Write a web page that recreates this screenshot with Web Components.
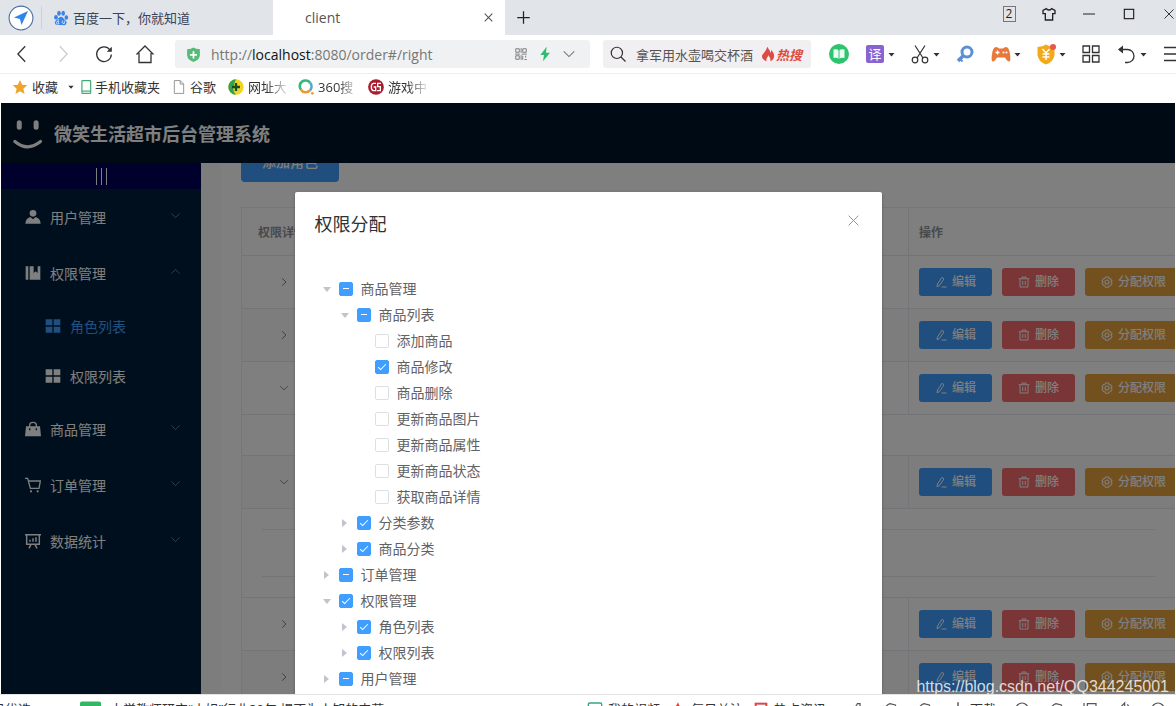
<!DOCTYPE html>
<html lang="zh-CN">
<head>
<meta charset="utf-8">
<title>client</title>
<style>
html,body{margin:0;height:100%;overflow:hidden}
body{font-family:"Open Sans","Noto Sans CJK SC",sans-serif;font-size:13px;color:#333;background:#fff}
</style>
</head>
<body>
<browser-shell>
  <tab-strip slot="tabs"></tab-strip>
  <nav-bar slot="nav"></nav-bar>
  <bookmark-bar slot="marks"></bookmark-bar>
  <admin-app slot="page">
    <side-menu slot="side">
      <menu-item icon="user" arrow="down">用户管理</menu-item>
      <menu-item icon="book" arrow="up">权限管理</menu-item>
      <menu-item icon="grid4" sub active>角色列表</menu-item>
      <menu-item icon="grid4" sub>权限列表</menu-item>
      <menu-item icon="bag" arrow="down">商品管理</menu-item>
      <menu-item icon="cart" arrow="down">订单管理</menu-item>
      <menu-item icon="board" arrow="down">数据统计</menu-item>
    </side-menu>
    <role-table slot="main"></role-table>
    <modal-dialog slot="dialog" heading="权限分配">
      <tree-node label="商品管理" open state="half">
        <tree-node label="商品列表" open state="half">
          <tree-node label="添加商品" leaf></tree-node>
          <tree-node label="商品修改" leaf state="on"></tree-node>
          <tree-node label="商品删除" leaf></tree-node>
          <tree-node label="更新商品图片" leaf></tree-node>
          <tree-node label="更新商品属性" leaf></tree-node>
          <tree-node label="更新商品状态" leaf></tree-node>
          <tree-node label="获取商品详情" leaf></tree-node>
        </tree-node>
        <tree-node label="分类参数" state="on"></tree-node>
        <tree-node label="商品分类" state="on"></tree-node>
      </tree-node>
      <tree-node label="订单管理" state="half"></tree-node>
      <tree-node label="权限管理" open state="on">
        <tree-node label="角色列表" state="on"></tree-node>
        <tree-node label="权限列表" state="on"></tree-node>
      </tree-node>
      <tree-node label="用户管理" state="half"></tree-node>
    </modal-dialog>
  </admin-app>
  <status-bar slot="status"></status-bar>
</browser-shell>

<script>
// Icon set, all on a 24-unit grid.
const L = 'fill="none" stroke="currentColor"';
const ICONS = {
  plane: `<circle cx="12" cy="12" r="11" fill="#fff" stroke="#4a6f9e" stroke-width="1"/><path d="M18.5 5.5 5.5 11.5 11 13 12.5 18.5z" fill="#2f86ea"/>`,
  paw: `<g fill="#3a84e8"><ellipse cx="4.5" cy="11" rx="2.8" ry="3.5"/><ellipse cx="9" cy="5" rx="2.7" ry="3.8"/><ellipse cx="15.3" cy="5" rx="2.7" ry="3.8"/><ellipse cx="20" cy="11.3" rx="2.7" ry="3.5"/><path d="M12 10c3 0 4 3 6 5s3 3 2 5.500-4 2.500-8 2-8 .5-9-2 .5-4 2.500-5.500S9 10 12 10z"/></g><path d="M8 14v6M8 17.500a2 2 0 1 0 1 2M14 16v3q0 1.500 3 1.500V16" stroke="#fff" fill="none"/>`,
  x: `<path ${L} stroke-width="2" d="M5 5l14 14M19 5 5 19"/>`,
  thinx: `<path ${L} stroke-width="1.800" d="M3 3l18 18M21 3 3 21"/>`,
  plus: `<path ${L} stroke-width="2" d="M12 2v20M2 12h20"/>`,
  shirt: `<path ${L} stroke-width="2" d="M8 4 3 6.500v5h3.500V21h11v-9.500H21v-5L16 4q-4 4-8 0z"/>`,
  min: `<path ${L} stroke-width="1.500" d="M3 12h18"/>`,
  max: `<rect x="4" y="4" width="16" height="16" ${L} stroke-width="2"/>`,
  back: `<path ${L} stroke-width="1.400" d="M15.500 3.500 7.500 12l8 8.500"/>`,
  fwd: `<path ${L} stroke-width="1.400" d="M8.500 3.500 16.500 12l-8 8.500"/>`,
  reload: `<path ${L} stroke-width="1.400" d="M18.500 7.500A8 8 0 1 0 20 12.500"/><path d="M20.500 4v5.500h-5.500z" fill="currentColor"/>`,
  home: `<path ${L} stroke-width="1.300" d="M3.500 12.500 12 4l8.500 8.500M6 11v9.500h12V11"/>`,
  shield: `<path d="M3 4.500Q9 4 12 2q3 2 9 2.500v9Q20 20 12 22.500 4 20 3 13.500z" fill="#57ba78"/><path d="M12 7.500v10M7 12.500h10" stroke="#fff" stroke-width="2.500"/>`,
  qr: `<g ${L} stroke-width="1.600"><path d="M3 3h6v6H3zM15 3h6v6h-6zM3 15h6v6H3z"/><path d="M12.200 2v8M2 12.200h8M13 12.200h9M15 15v7M20 15v3M18 21.500h4M12.200 14v8"/></g>`,
  bolt: `<path d="M14.500 1 5 13.500h5.500L9 23l10.500-13H13.500z" fill="#2ebd70"/>`,
  chev: `<path ${L} stroke-width="1.800" d="M3 7.500l9 9 9-9"/>`,
  chevup: `<path ${L} stroke-width="1.800" d="M3 16.500l9-9 9 9"/>`,
  chevr: `<path ${L} stroke-width="2" d="M7.500 3l9 9-9 9"/>`,
  caret: `<path d="M4 8h16l-8 9z" fill="currentColor"/>`,
  search: `<circle cx="10.500" cy="10.500" r="7.500" ${L} stroke-width="1.600"/><path ${L} stroke-width="1.600" d="M16 16l6 6"/>`,
  fire: `<path d="M11 1c2 4 4 5 4.500 9 1-1 1.500-3 1.500-4.500 3 4 5 7.500 4 11.500-1 4-4 5.500-5.500 6 1-4-1-6-3-9-1 3.500-4 4.500-2.500 9C6 22 3 19 3 15.500S8 10 11 1z" fill="#dd4b43"/>`,
  reader: `<circle cx="12" cy="12" r="10" fill="#2ec46f"/><path d="M6.500 7.500Q10 6.500 12 8.500q2-2 5.500-1v8.500q-3-1-5.500 1-2.500-2-5.500-1z" fill="#e9fff2"/><path d="M12 8v9" stroke="#2ec46f"/>`,
  scissors: `<g ${L} stroke-width="1.200"><path d="M7 3.500 15 16M17 3.500 9 16"/><circle cx="7" cy="18" r="2.800"/><circle cx="17" cy="18" r="2.800"/></g>`,
  key: `<g fill="none" stroke="#5b8fd6"><circle cx="14" cy="10" r="5" stroke-width="3"/><path stroke-width="3.600" d="M10 14 5 19"/><path stroke-width="2" d="M6 16l3.500 3.500"/></g>`,
  pad: `<path d="M7 5q2 0 3 1.500h4Q15 5 17 5q3 0 4 7t-.5 7.500Q18.500 20 16 15.500H8Q5.500 20 3.500 19.500 2 19 3 12T7 5z" fill="#e8793a"/><path d="M6.500 10.500h4M8.500 8.500v4" stroke="#fff" stroke-width="1.300"/><circle cx="14.500" cy="10.500" r="1" fill="#fff"/><circle cx="17.500" cy="10.500" r="1" fill="#fff"/>`,
  coin: `<path d="M3.500 5Q9 4.500 12 2.500 15 4.500 20.500 5v8q-1 7-8.500 9.500Q4.500 20 3.500 13z" fill="#f2a91c"/><path d="M8.500 7l3.500 4 3.500-4M12 11v7M8.500 12h7M8.500 15h7" ${L} style="color:#fff" stroke-width="1.400"/><circle cx="19" cy="5" r="3" fill="#e7594f"/>`,
  apps: `<g ${L} stroke-width="1.300"><path d="M4 4h6.500v6.500H4zM13.500 4H20v6.500h-6.500zM4 13.500h6.500V20H4zM13.500 13.500H20V20h-6.500z"/></g>`,
  undo: `<path ${L} stroke-width="1.300" d="M4 7.500h8.500a6.500 6.500 0 0 1 0 13H10"/><path d="M8 3.500 3 7.500 8 11.500z" fill="currentColor"/>`,
  menu: `<path ${L} stroke-width="1.300" d="M4 5.500h18M4 12h18M4 18.500h18"/>`,
  star: `<path d="M12 1.500l3.200 7.300 7.800.7-6 5.200 1.900 7.800-6.900-4.200-6.900 4.200L7 14.700 1 9.500l7.800-.7z" fill="#eda52b"/>`,
  phone: `<rect x="5" y="1" width="15" height="22" rx="1" fill="none" stroke="#41a975" stroke-width="2"/><path d="M5 19h15" stroke="#41a975" stroke-width="2"/>`,
  page: `<path fill="none" stroke="#8f8f8f" stroke-width="1.600" d="M4 1h10l6 6v16H4zM14 1v6h6"/>`,
  nav360: `<circle cx="12" cy="12" r="11.500" fill="#f0d623"/><path d="M12 .5a11.500 11.500 0 0 0 0 23Q4 17 12 .5z" fill="#31a34c"/><path d="M12 6v12M6 12h12" stroke="#164d24" stroke-width="3.500"/>`,
  so360: `<g fill="none" stroke-width="4"><path stroke="#37b77c" d="M4.500 16A8.500 8.500 0 0 1 18 5.500"/><path stroke="#55a7c9" d="M18 5.500A8.500 8.500 0 0 1 18 17"/><path stroke="#e99a35" d="M18 17A8.500 8.500 0 0 1 4.500 16"/></g><circle cx="21.500" cy="21.500" r="2" fill="#e99a35"/>`,
  game: `<circle cx="12" cy="12" r="11.800" fill="#a91d2f"/><path d="M12 6.500H8Q5 7 5 12t3 5.500h3.500V12H8.500M19.500 6.500h-5V11.500h4V17.500h-5" fill="none" stroke="#fff" stroke-width="2"/>`,
  user: `<circle cx="12" cy="6.500" r="5" fill="currentColor"/><path d="M8 12l4 3.500L16 12q7 2 7.500 10H.5Q1 14 8 12z" fill="currentColor"/>`,
  book: `<path d="M1 2h4v20H1zM7 2h6v10l3-2.500 3 2.500V2h4v20H7z" fill="currentColor"/>`,
  grid4: `<path d="M1 2h10v9H1zM13 2h10v9H13zM1 13h10v9H1zM13 13h10v9H13z" fill="currentColor"/>`,
  bag: `<path d="M1.500 8h21L24 23H0z" fill="currentColor"/><path d="M7 11V6q0-4 5-4t5 4v5" ${L} stroke-width="2"/><path d="M7 11v3M17 11v3" stroke="#001f3a" stroke-width="2"/>`,
  cart: `<path ${L} stroke-width="2" d="M0 2h4l4 15h13l2-11H6"/><circle cx="9" cy="21.500" r="1.700" fill="currentColor"/><circle cx="19" cy="21.500" r="1.700" fill="currentColor"/>`,
  board: `<g ${L} stroke-width="2.200"><path d="M0 2.500h24M2.500 2.500V17h19V2.500M9 17l-3 6M15 17l3 6M7.500 13v-3M12 13V8M16.500 13V6.500"/></g>`,
  smile: `<g ${L} stroke-linecap="round"><path stroke-width="4" d="M5 3v3.500M18.500 3v3.500"/><path stroke-width="2.500" d="M1.500 18q10 8.500 20.500 0"/></g>`,
  edit: `<path ${L} stroke-width="2" d="M14 2.500l4 3L9 19 4 21.500 5 16zM13 22h10"/>`,
  trash: `<path ${L} stroke-width="2" d="M1.500 5.500h21M8 5V2h8v3M4 6v16h16V6M9.500 10v8M14.500 10v8"/>`,
  gear: `<path ${L} stroke-width="2.200" d="M9 2h6l1 3 3 .5 3 4.500-2 2 2 3-3 4.500-3 .5-1 2.500H9L8 19.500l-3-.5L2 14.500 4 12 2 9.500 5 5l3-.5z"/><circle cx="12" cy="12" r="4" ${L} stroke-width="2.200"/>`,
  green: `<rect x="0" y="4" width="24" height="16" rx="2" fill="#31b863"/>`,
  video: `<rect x="2" y="3" width="20" height="18" rx="2" fill="none" stroke="#36a77c" stroke-width="2"/>`,
  flame: `<path d="M12 2q2 6 6 10t-6 10Q2 18 6 12t6-10z" fill="#d9483e"/>`,
  news: `<rect x="4" y="4" width="16" height="17" fill="none" stroke="#d64a43" stroke-width="3"/>`,
  horn: `<path ${L} stroke-width="1.800" d="M4 13Q10 12 14 4h4v17M18 12q4 0 4-4"/>`,
  rocket: `<path ${L} stroke-width="1.800" d="M4 20V12q2-6 8-8l8 2q2 5-3 12M8 12l8-4"/>`,
  down: `<path ${L} stroke-width="1.800" d="M12 2v16M6 13l6 6 6-6"/>`,
  ring: `<circle cx="12" cy="12" r="9" ${L} stroke-width="1.800"/>`,
  pages: `<path ${L} stroke-width="1.800" d="M3 3v18M8 4h13v16H8z"/>`,
  sound: `<path ${L} stroke-width="1.800" d="M3 9h4l6-6v18l-6-6H3zM17 5q6 7 0 14"/>`
};

class Base extends HTMLElement {
  connectedCallback() {
    if (this.shadowRoot) return;
    const t = document.createElement('template');
    t.innerHTML = `<style>*,:host{box-sizing:border-box}${this.css()}</style>${this.html()}`;
    this.attachShadow({mode: 'open'}).append(t.content.cloneNode(true));
    this.ready();
  }
  css() { return ''; }
  html() { return '<slot></slot>'; }
  ready() {}
}

customElements.define('ui-icon', class extends Base {
  css() { return `:host{display:block;flex:none;width:var(--s,16px);height:var(--s,16px)} svg{display:block;width:100%;height:100%}`; }
  html() { return `<svg viewBox="0 0 24 24" aria-hidden="true">${ICONS[this.getAttribute('name')]}</svg>`; }
});
const icon = (name, size = 16, extra = '') => `<ui-icon name="${name}" style="--s:${size}px" ${extra}></ui-icon>`;
const RESET = `button{font:inherit;color:inherit;background:none;border:0;padding:0;margin:0;display:flex;align-items:center;justify-content:center;flex:none}`;

customElements.define('browser-shell', class extends Base {
  // The status bar runs past the bottom edge of the window.
  css() { return `:host{display:flex;flex-direction:column;height:calc(100vh + 16px);background:#fff}
    .page{flex:1;min-height:0;display:flex;padding:0 1px}`; }
  html() { return `<slot name="tabs"></slot><slot name="nav"></slot><slot name="marks"></slot><div class="page"><slot name="page"></slot></div><slot name="status"></slot>`; }
});

customElements.define('tab-strip', class extends Base {
  css() { return RESET + `:host{display:flex;height:35px;flex:none;background:#e1e5ea;color:#222}
    .logo{width:41px}.tab{display:flex;align-items:center;width:232px;gap:4px;padding:0 11px;flex:none}
    .first{border-left:1px solid #cdd2d9;margin:6px 0;color:#3a4358}
    .on{background:#fff;padding:0 10px 0 32px;color:#555;font-size:14px}.on span{flex:1}
    .add{width:37px}.win{margin-left:auto;margin-right:-13px;display:flex;height:28px}.win button{width:40px}
    .two{border:1px solid #777;width:13px;height:16px;line-height:14px;font-size:12px;text-align:center}`; }
  html() { return `<button class="logo" aria-label="浏览器">${icon('plane', 26)}</button>
    <div class="tab first">${icon('paw')}<span>百度一下，你就知道</span></div>
    <div class="tab on"><span>client</span><button aria-label="关闭标签">${icon('x', 13)}</button></div>
    <button class="add" aria-label="新标签">${icon('plus', 15)}</button>
    <div class="win"><button><span class="two">2</span></button><button aria-label="皮肤">${icon('shirt')}</button><button aria-label="最小化">${icon('min')}</button><button aria-label="最大化">${icon('max', 14)}</button><button aria-label="关闭">${icon('thinx', 12)}</button></div>`; }
});

customElements.define('nav-bar', class extends Base {
  css() { return RESET + `:host{display:flex;align-items:center;height:39px;flex:none;padding-left:1px;border-bottom:1px solid #eee;color:#333}
    .nav{width:41px;height:38px}.nav[disabled]{color:#ccc}
    .box{display:flex;align-items:center;height:28px;background:#f0f1f2;border-radius:3px}
    .url{flex:1;min-width:0;margin:0 13px 0 10px;padding:0 14px 0 10px;gap:9px;color:#777;font-size:14px}
    .url b{font-weight:400;color:#111}.url .t{flex:1;outline:0;white-space:nowrap}
    .find{width:208px;flex:none;padding:0 8px 0 6px;gap:5px;background:#f1eff1}
    input{font:inherit;color:#555;border:0;background:none;outline:0;padding:0;width:119px;margin-left:4px}
    .hot{display:flex;align-items:center;color:#dd4b43;font-style:italic;font-weight:700;white-space:nowrap}
    .tools{display:flex;align-items:center;gap:12px;margin:0 -8px 0 16px;flex:none}
    .yi{width:18px;height:18px;margin:0 3px;border-radius:2px;background:#8a63d2;color:#fff;line-height:18px;text-align:center}`; }
  html() {
    const c = icon('caret', 9);
    return `<button class="nav" aria-label="后退">${icon('back', 22)}</button><button class="nav" disabled aria-label="前进">${icon('fwd', 22)}</button>
    <button class="nav" aria-label="刷新">${icon('reload', 22)}</button><button class="nav" aria-label="主页">${icon('home', 24)}</button>
    <div class="box url">${icon('shield', 17)}<div class="t" role="textbox" contenteditable="true" spellcheck="false" aria-label="地址">http://<b>localhost</b>:8080/order#/right</div>${icon('qr', 14)}${icon('bolt', 16)}${icon('chev', 14)}</div>
    <div class="box find">${icon('search', 18)}<input aria-label="搜索" value="拿军用水壶喝交杯酒"><span class="hot">${icon('fire', 16)}热搜</span></div>
    <div class="tools"><button aria-label="阅读">${icon('reader', 24)}</button><button><span class="yi">译</span>${c}</button><button aria-label="截图">${icon('scissors', 24)}${c}</button>
    <button aria-label="查找">${icon('key', 24)}</button><button aria-label="游戏">${icon('pad', 24)}${c}</button><button aria-label="优惠">${icon('coin', 24)}${c}</button>
    <button aria-label="应用">${icon('apps', 24)}</button><button aria-label="撤销">${icon('undo', 24)}${c}</button><button aria-label="菜单">${icon('menu', 24)}</button></div>`;
  }
});

customElements.define('bookmark-bar', class extends Base {
  css() { return `:host{display:flex;align-items:center;gap:12px;height:29px;flex:none;padding:0 12px 4px}
    a{display:flex;align-items:center;gap:4px;color:#333;text-decoration:none;white-space:nowrap;flex:none}
    .fav .c{margin:0 -8px 0 5px}.phone{gap:2px}
    .fade span{width:38px;overflow:hidden;-webkit-mask-image:linear-gradient(90deg,#000 50%,transparent 110%);mask-image:linear-gradient(90deg,#000 50%,transparent 110%)}`; }
  html() { return `<a class="fav" href="#">${icon('star')}<span>收藏</span>${icon('caret', 8, 'class="c"')}</a>
    <a class="phone" href="#">${icon('phone', 14)}<span>手机收藏夹</span></a><a href="#">${icon('page', 14)}<span>谷歌</span></a>
    <a class="fade" href="#">${icon('nav360')}<span>网址大</span></a><a class="fade" href="#">${icon('so360')}<span>360搜</span></a><a class="fade" href="#">${icon('game')}<span>游戏中</span></a>`; }
});

customElements.define('admin-app', class extends Base {
  css() { return `:host{flex:1;min-width:0;display:flex;flex-direction:column;position:relative;overflow:hidden;background:#fff}
    header{display:flex;align-items:center;gap:11px;height:60px;flex:none;padding:2px 12px 0;background:#001428;color:#fff}
    h1{margin:0;font-size:18px;line-height:24px;font-weight:700}
    .row{flex:1;min-height:0;display:flex}
    main{flex:1;min-width:0;overflow:hidden;padding-left:20px;background:#fafafa}
    .mask{position:absolute;inset:0;background:rgba(0,0,0,.5);overflow:hidden;padding-top:89px}
    .mark{position:absolute;right:6px;bottom:-2px;font:16px/18px "Liberation Sans",sans-serif;color:rgba(255,255,255,.8)}`; }
  html() { return `<header>${icon('smile', 30)}<h1>微笑生活超市后台管理系统</h1></header>
    <div class="row"><slot name="side"></slot><main><slot name="main"></slot></main></div>
    <div class="mask"><slot name="dialog"></slot></div><div class="mark">https://blog.csdn.net/QQ344245001</div>`; }
});

customElements.define('side-menu', class extends Base {
  css() { return RESET + `:host{display:block;width:200px;flex:none;background:#001f3a;color:#fff}
    button{width:100%;height:26px;background:#000058}i{width:1px;height:17px;margin:0 2px;background:#fff}`; }
  html() { return `<button aria-label="折叠菜单"><i></i><i></i><i></i></button><nav><slot></slot></nav>`; }
});

customElements.define('menu-item', class extends Base {
  css() { return `:host{display:block}
    a{display:flex;align-items:center;gap:9px;height:56px;padding:0 20px 0 24px;font-size:14px;color:#fff;text-decoration:none}
    span{flex:1}.arr{color:#8090a0;margin-bottom:4px}
    :host([sub]) a{height:50px;padding-left:44px}:host([active]) a{color:#409eff}`; }
  html() {
    const a = this.getAttribute('arrow');
    return `<a href="#">${icon(this.getAttribute('icon'))}<span><slot></slot></span>${a ? icon(a === 'up' ? 'chevup' : 'chev', 11, 'class="arr"') : ''}</a>`;
  }
});

customElements.define('action-button', class extends Base {
  css() { return `:host{display:inline-block}
    button{display:flex;align-items:center;gap:5px;height:28px;padding:0 16px;border:0;border-radius:3px;color:#fff;font:500 12px/12px "Open Sans","Noto Sans CJK SC",sans-serif;white-space:nowrap;background:#409eff}
    :host([kind=danger]) button{background:#f56c6c}:host([kind=warning]) button{background:#e6a23c}
    :host([kind=primary]) button{height:40px;padding:0 21px;font-size:14px;border-radius:4px}`; }
  html() { const i = this.getAttribute('icon'); return `<button>${i ? icon(i, 12) : ''}<slot></slot></button>`; }
});

customElements.define('role-table', class extends Base {
  // Shown part-way scrolled: the add button is half under the header.
  css() { return `:host{display:block;margin-top:-21px;padding-left:20px;background:#fff}
    table{width:100%;margin-top:25px;border-collapse:separate;border-spacing:0;table-layout:fixed;border:1px solid #ebeef5;border-width:1px 0 0 1px;color:#606266}
    .c1{width:84px}.c3{width:267px}
    th,td{padding:0;border-bottom:1px solid #e6e9f0;text-align:left}
    th{height:48px;font-size:12px;color:#909399;padding-left:16px;white-space:nowrap}
    th:last-child,td.act{padding-left:10px;border-left:1px solid #e8ebf2}
    td{height:53px}.alt td{background:#fafafa}
    .ex ui-icon{margin:0 auto}
    .btns{display:flex;gap:10px;width:max-content}
    td.short{height:41px}td.tall{height:89px;padding:0 20px}td.tall div{height:48px;border:1px solid #e8ebf2;border-width:1px 0}`; }
  html() {
    const row = (open, alt) => `<tr class="${alt ? 'alt' : ''}"><td class="ex">${icon(open ? 'chev' : 'chevr', 10)}</td><td></td><td class="act"><div class="btns">
      <action-button icon="edit">编辑</action-button><action-button icon="trash" kind="danger">删除</action-button><action-button icon="gear" kind="warning">分配权限</action-button></div></td></tr>`;
    return `<action-button kind="primary">添加角色</action-button>
    <table><colgroup><col class="c1"><col><col class="c3"></colgroup>
    <thead><tr><th>权限详情</th><th></th><th>操作</th></tr></thead>
    <tbody>${row(0, 0)}${row(0, 1)}${row(1, 0)}<tr><td class="short" colspan="3"></td></tr>${row(1, 1)}<tr><td class="tall" colspan="3"><div></div></td></tr>${row(0, 0)}${row(0, 1)}</tbody></table>`;
  }
});

customElements.define('modal-dialog', class extends Base {
  css() { return RESET + `:host{display:block;width:50%;margin:0 auto;background:#fff;border-radius:2px;box-shadow:0 1px 3px rgba(0,0,0,.3);color:#606266}
    .head{display:flex;align-items:flex-start;justify-content:space-between;padding:20px 22px 10px 20px}
    h2{margin:0;font-size:18px;line-height:24px;font-weight:400;color:#303133}
    button{width:13px;height:16px;color:#909399}
    .body{padding:30px 20px}`; }
  html() { return `<div role="dialog"><div class="head"><h2>${this.getAttribute('heading')}</h2><button aria-label="关闭">${icon('thinx', 13)}</button></div><div class="body"><slot></slot></div></div>`; }
});

customElements.define('tree-node', class extends Base {
  css() { return `:host{display:block}
    .row{display:flex;align-items:center;height:26px}
    .tri{width:24px;flex:none;display:flex;justify-content:center}
    .tri::before{content:"";border:solid transparent;border-width:4px 0 4px 5px;border-left-color:#c0c4cc}
    :host([open]) .tri::before{border:solid transparent;border-width:5px 4px 0 4px;border-top-color:#c0c4cc}
    :host([leaf]) .tri{visibility:hidden}
    label{display:flex;align-items:center;gap:8px;font-size:14px;line-height:26px;white-space:nowrap}
    input{appearance:none;position:relative;width:14px;height:14px;margin:0;border:1px solid #dcdfe6;border-radius:2px;background:#fff}
    input:checked,input:indeterminate{background:#409eff;border-color:#409eff}
    input:checked::after{content:"";position:absolute;left:4px;top:1px;width:4px;height:8px;border:solid #fff;border-width:0 1px 1px 0;transform:rotate(45deg);box-sizing:border-box}
    input:indeterminate::after{content:"";position:absolute;left:3px;right:3px;top:5px;height:1px;background:#fff;border:0;transform:none;width:auto}
    .kids{margin-left:18px}`; }
  html() { return `<div class="row"><span class="tri"></span><label><input type="checkbox">${this.getAttribute('label')}</label></div><div class="kids"><slot></slot></div>`; }
  ready() {
    const box = this.shadowRoot.querySelector('input'), s = this.getAttribute('state');
    box.checked = s === 'on';
    box.indeterminate = s === 'half';
  }
});

customElements.define('status-bar', class extends Base {
  css() { return `:host{display:flex;align-items:center;height:28px;flex:none;border-top:1px solid #e4e4e4;color:#333;white-space:nowrap;overflow:hidden}
    a{display:flex;align-items:center;gap:5px;color:inherit;text-decoration:none}
    .first{margin-left:-21px;width:101px}.news{gap:9px}
    .right{margin-left:auto;display:flex;align-items:center;gap:10px;padding-right:10px}
    .tools{display:flex;align-items:center;gap:18px;margin-left:12px;color:#555}.tools a{gap:4px;color:#333}`; }
  html() { return `<a class="first" href="#">今日优选</a><a class="news" href="#">${icon('green', 21)}大学教师研究“小姐”行业20年 揭不为人知的内幕</a>
    <div class="right"><a href="#">${icon('video')}我的视频</a><a href="#">${icon('flame')}每日关注</a><a href="#">${icon('news')}热点资讯</a>
    <div class="tools">${icon('horn')}${icon('rocket')}${icon('rocket')}<a href="#">${icon('down')}下载</a>${icon('ring')}${icon('rocket')}${icon('pages')}${icon('sound')}${icon('ring')}</div></div>`; }
});
</script>
</body>
</html>
